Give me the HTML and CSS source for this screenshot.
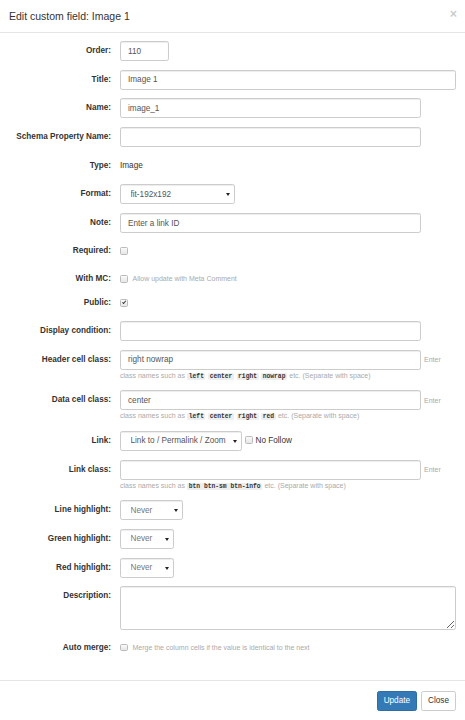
FILE: index.html
```html
<!DOCTYPE html>
<html lang="en">
<head>
    <meta charset="UTF-8">
    <meta name="viewport" content="width=device-width, initial-scale=1.0">
    <title>Edit custom field</title>
    <link rel="stylesheet" href="styles.css">
</head>
<body>
<div class="modal">
    <div class="modal-header">
        <h4 class="modal-title">Edit custom field: Image 1</h4>
        <button class="close" type="button">&times;</button>
    </div>
    <form class="modal-body">
        <div class="form-group">
            <label>Order:</label>
            <div class="field"><input class="form-control w-order" type="text" value="110"></div>
        </div>
        <div class="form-group">
            <label>Title:</label>
            <div class="field"><input class="form-control" type="text" value="Image 1"></div>
        </div>
        <div class="form-group">
            <label>Name:</label>
            <div class="field"><input class="form-control w-mid" type="text" value="image_1"></div>
        </div>
        <div class="form-group">
            <label>Schema Property Name:</label>
            <div class="field"><input class="form-control w-mid" type="text"></div>
        </div>
        <div class="form-group">
            <label>Type:</label>
            <div class="field static">Image</div>
        </div>
        <div class="form-group">
            <label>Format:</label>
            <div class="field">
                <span class="select w-format"><select class="form-control"><option>fit-192x192</option></select></span>
            </div>
        </div>
        <div class="form-group">
            <label>Note:</label>
            <div class="field"><input class="form-control w-mid" type="text" placeholder="Enter a link ID"></div>
        </div>
        <div class="form-group check-row required-row">
            <label>Required:</label>
            <div class="field"><input class="cb" type="checkbox"></div>
        </div>
        <div class="form-group check-row mc-row">
            <label>With MC:</label>
            <div class="field"><input class="cb" type="checkbox"><span class="note">Allow update with Meta Comment</span></div>
        </div>
        <div class="form-group check-row public-row">
            <label>Public:</label>
            <div class="field"><input class="cb" type="checkbox" checked></div>
        </div>
        <div class="form-group">
            <label>Display condition:</label>
            <div class="field"><input class="form-control w-mid" type="text"></div>
        </div>
        <div class="form-group">
            <label>Header cell class:</label>
            <div class="field">
                <div class="inline"><input class="form-control w-mid" type="text" value="right nowrap"><span class="enter">Enter</span></div>
                <div class="help">class names such as <code>left</code> <code>center</code> <code>right</code> <code>nowrap</code> etc. (Separate with space)</div>
            </div>
        </div>
        <div class="form-group">
            <label>Data cell class:</label>
            <div class="field">
                <div class="inline"><input class="form-control w-mid" type="text" value="center"><span class="enter">Enter</span></div>
                <div class="help">class names such as <code>left</code> <code>center</code> <code>right</code> <code>red</code> etc. (Separate with space)</div>
            </div>
        </div>
        <div class="form-group">
            <label>Link:</label>
            <div class="field inline">
                <span class="select w-link"><select class="form-control"><option>Link to / Permalink / Zoom</option></select></span>
                <input class="cb nofollow" type="checkbox"><span class="nofollow-text">No Follow</span>
            </div>
        </div>
        <div class="form-group">
            <label>Link class:</label>
            <div class="field">
                <div class="inline"><input class="form-control w-mid" type="text"><span class="enter">Enter</span></div>
                <div class="help">class names such as <code>btn btn-sm btn-info</code> etc. (Separate with space)</div>
            </div>
        </div>
        <div class="form-group">
            <label>Line highlight:</label>
            <div class="field"><span class="select w-line"><select class="form-control muted"><option>Never</option></select></span></div>
        </div>
        <div class="form-group">
            <label>Green highlight:</label>
            <div class="field"><span class="select w-hl"><select class="form-control muted"><option>Never</option></select></span></div>
        </div>
        <div class="form-group">
            <label>Red highlight:</label>
            <div class="field"><span class="select w-hl"><select class="form-control muted"><option>Never</option></select></span></div>
        </div>
        <div class="form-group">
            <label>Description:</label>
            <div class="field"><textarea class="form-control desc"></textarea></div>
        </div>
        <div class="form-group check-row last-row">
            <label>Auto merge:</label>
            <div class="field"><input class="cb" type="checkbox"><span class="note">Merge the column cells if the value is identical to the next</span></div>
        </div>
    </form>
    <div class="modal-footer">
        <button class="btn btn-primary" type="button">Update</button>
        <button class="btn btn-default" type="button">Close</button>
    </div>
</div>
</body>
</html>
```

FILE: styles.css
```css
body { margin: 0; background: #fff; font-family: "Liberation Sans", Arial, sans-serif; font-size: 8.2px; color: #333; }
.modal { width: 465px; background: #fff; }

.modal-header { position: relative; padding: 8px 9px; border-bottom: 1px solid #e5e5e5; }
.modal-title { margin: 0; font-size: 10.5px; font-weight: normal; line-height: 16px; color: #333; }
.close { position: absolute; top: 8px; right: 8px; padding: 0; border: 0; background: none; font-family: inherit; font-size: 12.5px; font-weight: bold; line-height: 12px; color: #000; opacity: .2; }

.modal-body { padding: 8px 9px 23px 0; }
.form-group { display: grid; grid-template-columns: 111px 336px; column-gap: 9px; margin-bottom: 8.7px; }
.form-group label { text-align: right; font-weight: bold; line-height: 20px; white-space: nowrap; }
.field { min-width: 0; }
.static { line-height: 20px; }
.inline { display: flex; align-items: center; }

.form-control { box-sizing: border-box; display: block; width: 100%; height: 20px; padding: 0 7px; border: 1px solid #ccc; border-radius: 2.3px; background: #fff; font-family: inherit; font-size: 8.2px; color: #555; box-shadow: inset 0 1px 1px rgba(0,0,0,.075); }
.form-control::placeholder { color: #555; }
.w-order { width: 49px; }
.w-mid { width: 301px; flex: none; }

.select { position: relative; display: inline-block; vertical-align: top; }
.select select { appearance: none; -webkit-appearance: none; padding: 0 12px 0 9.5px; }
.select::after { content: ""; position: absolute; top: 9px; right: 5px; border-left: 2px solid transparent; border-right: 2px solid transparent; border-top: 3px solid #222; }
.w-format { width: 115px; }
.w-link { width: 122px; }
.w-line { width: 63px; }
.w-hl { width: 54px; }
.muted { color: #777; }

.enter { margin-left: 3px; font-size: 7px; color: #aaa; }
.help { margin-top: 1px; line-height: 10px; font-size: 7px; color: #aaa; white-space: nowrap; }
code { margin: 0 0.4px; padding: 0 1.5px; border-radius: 1.5px; background: #eee; font-family: "Liberation Mono", monospace; font-size: 6.3px; font-weight: bold; color: #333; }

.check-row label { line-height: 18px; }
.check-row .field { display: flex; align-items: center; height: 18px; }
.required-row { margin-bottom: 10px; }
.mc-row { margin-bottom: 6px; }
.public-row { margin-bottom: 9px; }
.last-row { margin-bottom: 0; }
.note { margin-left: 5px; font-size: 7px; color: #aaa; }

.cb { appearance: none; -webkit-appearance: none; position: relative; box-sizing: border-box; width: 7.5px; height: 7.5px; margin: 0; border: 1px solid #bbb; border-radius: 1.5px; background: linear-gradient(#fafafa, #e6e6e6); }
.cb:checked::after { content: ""; position: absolute; left: 1.8px; top: 0.2px; width: 1.4px; height: 3.4px; border-right: 1.2px solid #333; border-bottom: 1.2px solid #333; transform: rotate(40deg); }
.nofollow { margin: -2px 0 0 3px; }
.nofollow-text { margin-left: 3px; color: #333; }

.desc { height: 43.5px; padding: 4px 7px; resize: vertical; }

.modal-footer { display: flex; justify-content: flex-end; gap: 4px; padding: 10px 9px; border-top: 1px solid #e5e5e5; }
.btn { box-sizing: border-box; height: 20px; padding: 0 6px; border: 1px solid; border-radius: 2.3px; font-family: inherit; font-size: 8.2px; line-height: 18px; }
.btn-primary { background: #337ab7; border-color: #2e6da4; color: #fff; }
.btn-default { background: #fff; border-color: #ccc; color: #333; }
```
